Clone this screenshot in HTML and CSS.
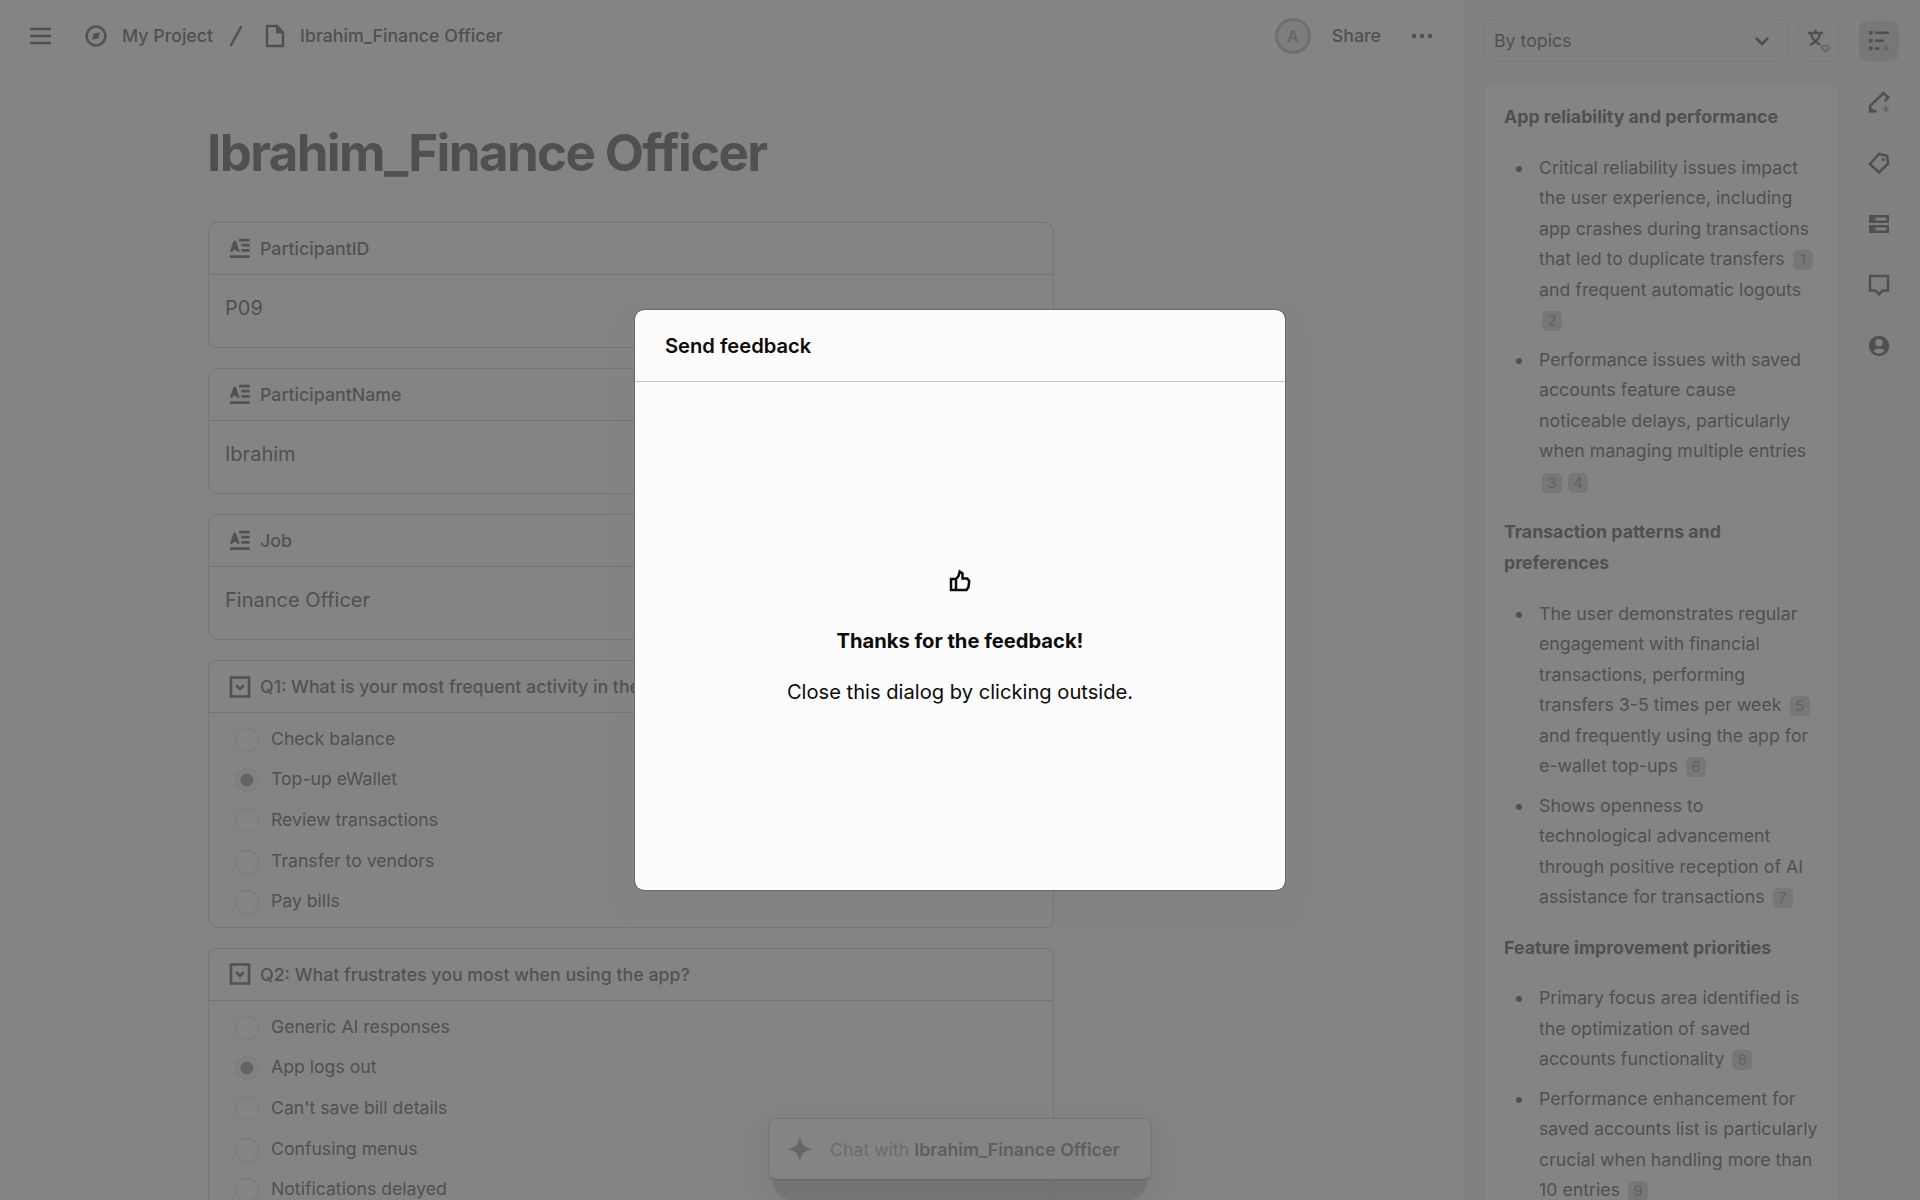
FILE: index.html
```html
<!DOCTYPE html>
<html lang="en">
<head>
<meta charset="utf-8">
<title>Ibrahim_Finance Officer</title>
<link rel="stylesheet" href="styles.css">
</head>
<body>
<svg class="sprite" aria-hidden="true">
  <symbol id="i-text" viewBox="0 0 22 24"><path d="M0 15 4 3h2.600L10.600 15H7.600l-.5-2H3.500L3 15zM10 .8h11.500v3H10zm2.500 5.600h9v2.900h-9zm0 5.700h9v2.900h-9zM0 18.800h21.500v3H0z"/></symbol>
  <symbol id="i-select" viewBox="0 0 22 22"><path d="M2 1.500h18v19H2z" fill="none" stroke="currentColor" stroke-width="2.600"/><path d="M7.200 9.200 11 13l3.800-3.800" fill="none" stroke="currentColor" stroke-width="2.600"/></symbol>
</svg>
<div class="app">
  <main class="main">
    <header class="topbar">
      <svg class="menu" viewBox="0 0 22 18"><path d="M0 2h21M0 9h21M0 16h21"/></svg>
      <svg class="compass" viewBox="0 0 22 22"><circle cx="11" cy="11" r="9.400"/><path class="solid" d="m14.800 7.200-1.600 6-6 1.600 1.600-6z"/></svg>
      <span class="crumb">My Project</span>
      <svg class="slash" viewBox="0 0 14 22"><path d="M12.500 1 1.500 21"/></svg>
      <svg class="doc" viewBox="0 0 20 24"><path d="M2 2h10l6 6.500V22H2z"/><path class="solid" d="M11 2v7.500h7z"/></svg>
      <span class="crumb">Ibrahim_Finance Officer</span>
      <span class="spacer"></span>
      <span class="avatar">A</span>
      <span class="share">Share</span>
      <svg class="more" viewBox="0 0 22 6"><circle cx="3" cy="3" r="2.300"/><circle cx="11" cy="3" r="2.300"/><circle cx="19" cy="3" r="2.300"/></svg>
    </header>
    <article class="doc-body">
      <h1>Ibrahim_Finance Officer</h1>
      <section class="card"><h2><svg><use href="#i-text"/></svg>ParticipantID</h2><p>P09</p></section>
      <section class="card"><h2><svg><use href="#i-text"/></svg>ParticipantName</h2><p>Ibrahim</p></section>
      <section class="card"><h2><svg><use href="#i-text"/></svg>Job</h2><p>Finance Officer</p></section>
      <section class="card"><h2><svg><use href="#i-select"/></svg>Q1: What is your most frequent activity in the app?</h2>
        <ul class="options"><li>Check balance</li><li class="on">Top-up eWallet</li><li>Review transactions</li><li>Transfer to vendors</li><li>Pay bills</li></ul>
      </section>
      <section class="card"><h2><svg><use href="#i-select"/></svg>Q2: What frustrates you most when using the app?</h2>
        <ul class="options"><li>Generic AI responses</li><li class="on">App logs out</li><li>Can't save bill details</li><li>Confusing menus</li><li>Notifications delayed</li></ul>
      </section>
    </article>
  </main>

  <aside class="panel">
    <div class="filters">
      <div class="select">By topics<svg viewBox="0 0 16 10"><path d="m2 2 6 6 6-6"/></svg></div>
      <div class="translate"><svg viewBox="0 0 26 26"><path d="M3 5h15M10.500 1.500V5M6 6c1 5.500 5 8.500 9.500 11M15 6c-1 5.500-5 8.500-10 11"/><path class="gem" d="M18 17.800h5l1.500 2-4 4-4-4z"/></svg></div>
    </div>
    <div class="insights">
      <h3>App reliability and performance</h3>
      <ul>
        <li>Critical reliability issues impact the user experience, including app crashes during transactions that led to duplicate transfers <b>1</b> and frequent automatic logouts <b>2</b></li>
        <li>Performance issues with saved accounts feature cause noticeable delays, particularly when managing multiple entries <b>3</b><b>4</b></li>
      </ul>
      <h3>Transaction patterns and preferences</h3>
      <ul>
        <li>The user demonstrates regular engagement with financial transactions, performing transfers 3-5 times per week <b>5</b> and frequently using the app for e-wallet top-ups <b>6</b></li>
        <li>Shows openness to technological advancement through positive reception of AI assistance for transactions <b>7</b></li>
      </ul>
      <h3>Feature improvement priorities</h3>
      <ul>
        <li>Primary focus area identified is the optimization of saved accounts functionality <b>8</b></li>
        <li>Performance enhancement for saved accounts list is particularly crucial when handling more than 10 entries <b>9</b></li>
      </ul>
    </div>
  </aside>

  <nav class="rail">
    <span class="active"><svg viewBox="0 0 22 22"><path class="solid" d="M1 1h3.600v3.600H1zM1 9h3.600v3.600H1zM1 16.600h3.600v3.600H1zM7 1.600h14v2.400H7zM7 9.600h9v2.400H7zM7 17.300h4.500v2.400H7z"/><path class="dim" d="m18 14 1.300 2.800 2.700 1.400-2.700 1.300-1.300 2.500-1.400-2.500-2.600-1.300 2.600-1.400z"/></svg></span>
    <span><svg viewBox="0 0 22 22"><path d="M8.500 20.200H2V15L15.500 2l4.800 4.500-3.600 3.700"/><path class="solid" d="M1 14.500l7.500 6.800H1z"/><path class="dim" d="m18 14 1.200 2.800L22 18l-2.800 1.200L18 22l-1.200-2.800L14 18l2.800-1.200z"/></svg></span>
    <span><svg viewBox="0 0 22 22"><path d="M1.800 12 11 2l8 1.800 1.200 7.700L11 20.500z"/><circle class="solid" cx="15.200" cy="7.500" r="1.600"/></svg></span>
    <span><svg viewBox="0 0 22 22"><path class="solid" fill-rule="evenodd" d="M1 2h20v8H1zm6.500 2.600v2.800H18.500V4.600zM1 12h20v8H1zm6.500 2.600v2.800H18.500v-2.800z"/></svg></span>
    <span><svg viewBox="0 0 22 22"><path d="M2 2h18v14.500h-5.500L11 20.300l-3.500-3.800H2z"/></svg></span>
    <span><svg viewBox="0 0 22 22"><path class="solid" fill-rule="evenodd" d="M11 .8a10.200 10.200 0 1 0 0 20.400A10.200 10.200 0 0 0 11 .8zm0 3.200a3.800 3.800 0 1 1 0 7.600A3.800 3.800 0 0 1 11 4zm0 14.600a7.500 7.500 0 0 1-5.800-2.900c1.500-1.500 3.700-2.200 5.800-2.200s4.300.7 5.800 2.200A7.500 7.500 0 0 1 11 18.600z"/></svg></span>
  </nav>
</div>

<div class="chat"><svg viewBox="0 0 26 26"><path d="M13 0c1.300 8 4 11.500 12.500 13C17 14.500 14.300 18 13 26 11.700 18 9 14.500.5 13 9 11.500 11.700 8 13 0z"/></svg><span>Chat with <strong>Ibrahim_Finance Officer</strong></span></div>

<div class="overlay">
  <div class="dialog" role="dialog">
    <header>Send feedback</header>
    <div class="content">
      <svg viewBox="0 0 22 22"><path d="M2 9h5v11H2zM7 9l2.500-3 1.200-4.500 2.800 2V8.500h4.800L20.200 11l-.7 6-2 3H7"/></svg>
      <strong>Thanks for the feedback!</strong>
      <p>Close this dialog by clicking outside.</p>
    </div>
  </div>
</div>
</body>
</html>
```
FILE: styles.css
```css
* { box-sizing: border-box; margin: 0; padding: 0; }
body { width: 1920px; height: 1200px; overflow: hidden; background: #848484; color: #505050; font-family: Inter, "Liberation Sans", sans-serif; font-size: 17.75px; }
svg { display: block; flex: none; fill: none; stroke: currentColor; stroke-width: 2.5; overflow: visible; }
ul { list-style: none; }
.sprite { position: absolute; width: 0; height: 0; }
.solid { fill: currentColor; stroke: none; }
.app { display: grid; grid-template-columns: 1464px 394px 62px; height: 1200px; overflow: hidden; }
.main { min-width: 0; }

.topbar { display: flex; align-items: center; height: 71px; padding: 0 31px 0 30px; font-weight: 500; }
.menu { width: 22px; height: 18px; margin-right: 33px; }
.compass { width: 22px; height: 22px; margin-right: 15px; }
.slash { width: 14px; height: 22px; margin: 0 22px 0 16px; }
.doc { width: 20px; height: 24px; margin-right: 15px; }
.spacer { flex: 1; }
.avatar { display: grid; place-items: center; width: 36px; height: 36px; border: 3px solid #6f6f6f; border-radius: 50%; background: #7d7d7d; color: #676767; font-size: 16px; font-weight: 600; margin-right: 21px; }
.share { margin-right: 30px; }
.more { width: 22px; height: 6px; fill: currentColor; stroke: none; }

.doc-body { width: 846px; margin-left: 208px; padding-top: 51px; }
h1 { height: 62px; line-height: 62px; margin: 0 0 38px -1px; font-size: 51px; font-weight: 700; letter-spacing: -1.62px; white-space: nowrap; }
.card { border: 1px solid #767676; border-radius: 9px; margin-bottom: 20px; }
.card h2 { display: flex; align-items: center; height: 52px; padding: 0 20px; border-bottom: 1px solid #747474; font-size: 17.75px; font-weight: 500; color: #525252; }
.card h2 svg { width: 22px; height: 22px; margin-right: 9px; fill: currentColor; stroke: none; }
.card p { height: 72px; padding: 19px 16px 0; font-size: 20px; line-height: 29px; }
.options { padding: 5px 26px 6px; font-size: 17.65px; }
.options li { display: flex; align-items: center; height: 40.6px; }
.options li::before { content: ""; width: 22px; height: 22px; margin: 3px 12px 0 0; border: 1px solid #7a7a7a; border-radius: 50%; background: #858585; }
.options .on::before { background: radial-gradient(circle, #636363 6px, #818181 7px); }

.panel { background: #808080; padding: 19px 19px 0; }
.filters { display: flex; gap: 8px; margin-bottom: 20px; }
.select { display: flex; align-items: center; justify-content: space-between; width: 307px; height: 43px; padding: 0 18px 0 10px; border: 1px solid #7a7a7a; border-radius: 10px; }
.select svg { width: 16px; height: 10px; stroke-width: 2.8; }
.translate { display: grid; place-items: center; width: 42px; height: 43px; border: 1px solid #7a7a7a; border-radius: 10px; }
.translate svg { width: 26px; height: 26px; stroke-width: 2.3; }
.translate .gem { stroke: #696969; stroke-width: 2; }
.insights { width: 356px; height: 1130px; padding: 19px 18px 0 20px; border: 1px solid #7c7c7c; border-radius: 10px; background: #848484; line-height: 30.5px; }
h3 { font-size: 17.75px; font-weight: 700; margin-bottom: 20.3px; }
.insights ul { padding-left: 35px; margin-bottom: 20px; }
.insights li { position: relative; margin-bottom: 9px; }
.insights li:last-child { margin-bottom: 0; }
.insights li::before { content: ""; position: absolute; left: -23px; top: 13px; width: 6px; height: 6px; border-radius: 50%; background: #505050; }
.insights b { display: inline-grid; place-items: center; width: 20px; height: 20px; margin: 0 3px; border-radius: 5px; background: #777; color: #626262; font-size: 15px; font-weight: 400; line-height: 20px; vertical-align: 0; }

.rail { display: flex; flex-direction: column; gap: 21px; padding: 21px 0 0 1px; background: #808080; }
.rail span { display: grid; place-items: center; width: 40px; height: 40px; border-radius: 8px; }
.rail .active { background: #777; }
.rail svg { width: 22px; height: 22px; }
.rail .dim { fill: #666; stroke: none; }

.chat { position: absolute; left: 768px; top: 1118px; display: flex; align-items: center; width: 384px; height: 63px; padding-left: 18px; border: 1px solid #767676; border-bottom: 2px solid #6c6c6c; border-radius: 9px; background: #848484; color: #6b6b6b; box-shadow: 0 12px 22px 8px rgba(0,0,0,.05); }
.chat::after { content: ""; position: absolute; z-index: -1; left: 4px; right: 4px; top: 61px; height: 20px; border-radius: 0 0 20px 20px / 0 0 18px 18px; background: #797979; }
.chat svg { width: 26px; height: 26px; margin-right: 17px; fill: #666; stroke: none; }
.chat strong { color: #5e5e5e; font-weight: 600; }

.overlay { position: absolute; inset: 0; display: grid; place-items: center; }
.dialog { display: flex; flex-direction: column; width: 652px; height: 582px; border: 1px solid #6a6a6a; border-radius: 10px; background: #fcfcfc; background-clip: padding-box; color: #0c0c0c; font-size: 20.15px; box-shadow: 0 16px 24px 24px rgba(0,0,0,.008); }
.dialog header { display: flex; align-items: center; height: 72px; padding: 0 30px; border-bottom: 1px solid #c6c6c6; font-weight: 600; }
.content { flex: 1; display: flex; flex-direction: column; align-items: center; justify-content: center; padding-top: 4px; }
.content svg { width: 22px; height: 22px; margin-bottom: 36px; stroke-width: 2.5; }
.content strong { font-weight: 700; line-height: 26px; margin-bottom: 24px; }
.content p { line-height: 28px; }
```
